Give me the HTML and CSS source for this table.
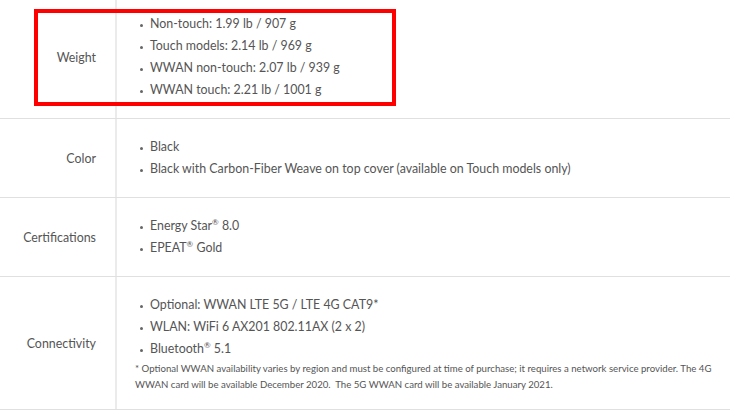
FILE: index.html
```html
<!DOCTYPE html>
<html lang="en">
  <head>
    <meta charset="UTF-8" />
    <meta name="viewport" content="width=device-width, initial-scale=1.0" />
    <title>Tech Specs</title>
    <link rel="stylesheet" href="styles.css">
  </head>
  <body>
    <div class="specs">
      <div class="spec-row">
        <div class="spec-label">Weight</div>
        <div class="spec-value">
          <ul>
            <li>Non-touch: 1.99 lb / 907 g</li>
            <li>Touch models: 2.14 lb / 969 g</li>
            <li>WWAN non-touch: 2.07 lb / 939 g</li>
            <li>WWAN touch: 2.21 lb / 1001 g</li>
          </ul>
        </div>
      </div>
      <div class="spec-row">
        <div class="spec-label">Color</div>
        <div class="spec-value">
          <ul>
            <li>Black</li>
            <li>Black with Carbon-Fiber Weave on top cover (available on Touch models only)</li>
          </ul>
        </div>
      </div>
      <div class="spec-row">
        <div class="spec-label">Certifications</div>
        <div class="spec-value">
          <ul>
            <li>Energy Star<sup>&reg;</sup> 8.0</li>
            <li>EPEAT<sup>&reg;</sup> Gold</li>
          </ul>
        </div>
      </div>
      <div class="spec-row">
        <div class="spec-label">Connectivity</div>
        <div class="spec-value">
          <ul>
            <li>Optional: WWAN LTE 5G / LTE 4G CAT9*</li>
            <li>WLAN: WiFi 6 AX201 802.11AX (2 x 2)</li>
            <li>Bluetooth<sup>&reg;</sup> 5.1</li>
          </ul>
          <p class="footnote">* Optional WWAN availability varies by region and must be configured at time of purchase; it requires a network service provider. The 4G WWAN card will be available December 2020.&nbsp; The 5G WWAN card will be available January 2021.</p>
        </div>
      </div>
      <div class="highlight"></div>
    </div>
  </body>
</html>
```

FILE: styles.css
```css
body {
  font-family: Lato, "Open Sans", sans-serif;
  margin: 0;
  background-color: #fff;
  color: #555;
  overflow: hidden;
}
.specs {
  position: relative;
  margin-top: -4px;
}
.spec-row {
  display: grid;
  grid-template-columns: 117px 1fr;
  border-bottom: 1px solid #e0e0e0;
}
.spec-label {
  display: flex;
  align-items: center;
  justify-content: flex-end;
  padding-right: 19px;
  border-right: 2px solid #ebebeb;
  font-size: 12.4px;
}
.spec-value {
  padding: 17px 10px 17px 18px;
  font-size: 12.4px;
}
ul {
  list-style: none;
  margin: 0;
  padding: 0;
}
li {
  position: relative;
  padding-left: 15px;
  line-height: 22px;
}
li::before {
  content: "";
  position: absolute;
  left: 5px;
  top: 11px;
  width: 3px;
  height: 3px;
  border-radius: 50%;
  background-color: #666;
}
sup {
  font-size: 8px;
  line-height: 0;
  vertical-align: 5px;
}
.footnote {
  margin: 0;
  font-size: 9.65px;
  line-height: 16px;
}
.highlight {
  position: absolute;
  left: 34px;
  top: 13px;
  width: 354px;
  height: 89px;
  border: 4px solid #ff0000;
}
```
